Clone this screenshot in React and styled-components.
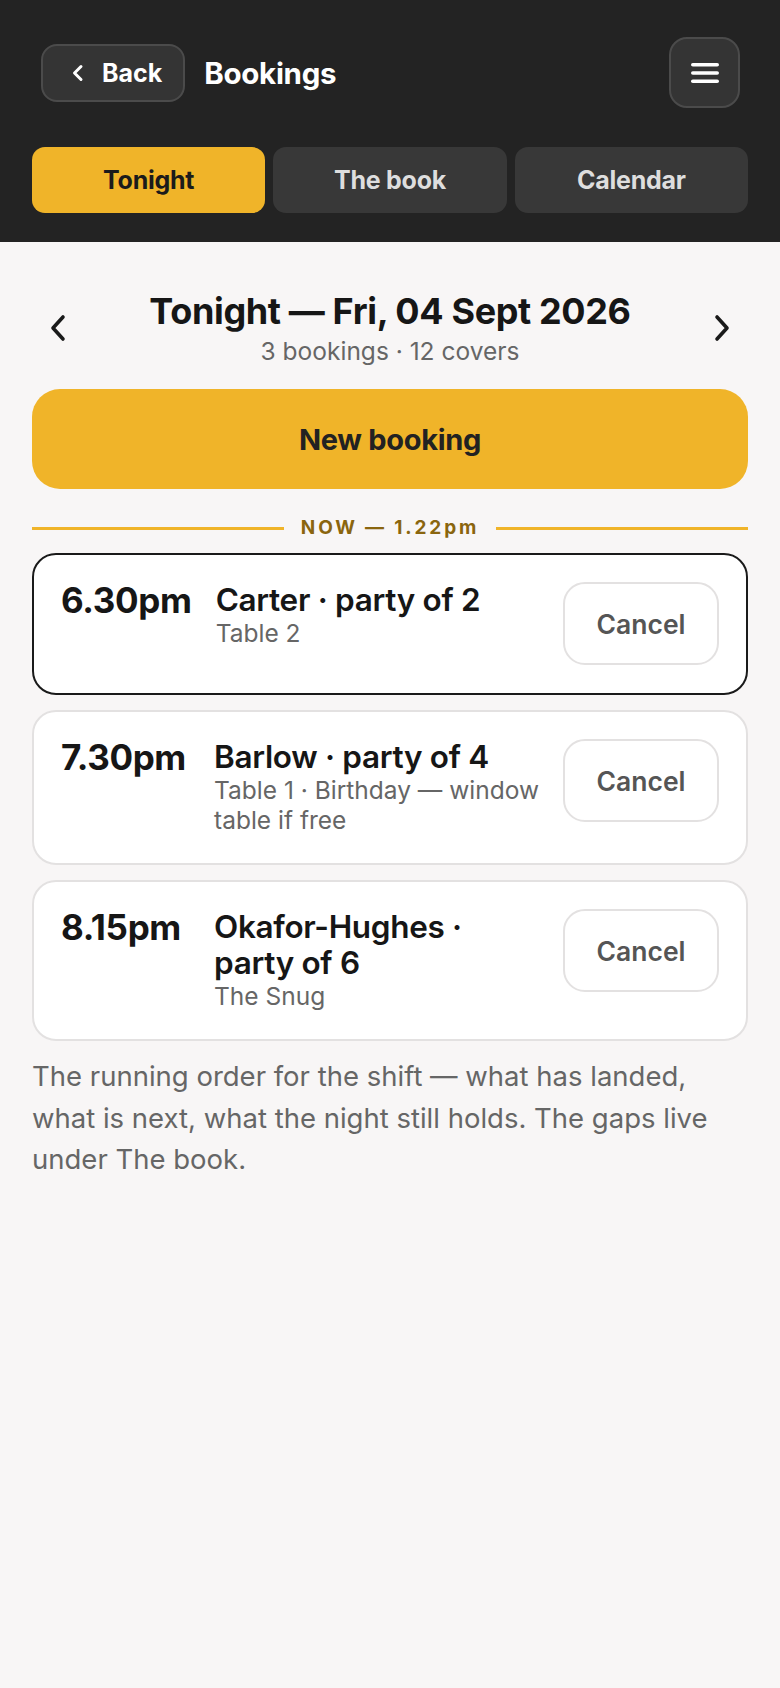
import React from "react"
import styled, { createGlobalStyle } from "styled-components"

const GlobalStyle = createGlobalStyle`
  html, body {
    margin: 0;
    padding: 0;
    background: #f8f6f6;
    font-family: Inter, "Noto Sans", "Liberation Sans", sans-serif;
  }
  * { box-sizing: border-box; }
`

const Page = styled.div`
  min-height: 1688px;
  background: #f8f6f6;
`

const Header = styled.header`
  background: #232323;
  padding: 37px 32px 29px;
`

const TopRow = styled.div`
  display: flex;
  align-items: center;
  padding: 0 8px 0 9px;
  gap: 19px;
`

const BackButton = styled.button`
  display: flex;
  align-items: center;
  gap: 18px;
  height: 58px;
  padding: 0 21px 0 29px;
  background: #343434;
  border: 2px solid #4b4b4b;
  border-radius: 16px;
  color: #fff;
  font-family: inherit;
  font-size: 25px;
  font-weight: 700;
`

const Title = styled.h1`
  margin: 0;
  flex: 1;
  color: #fff;
  font-size: 29.5px;
  font-weight: 700;
  letter-spacing: -0.01em;
`

const MenuButton = styled.button`
  width: 71px;
  height: 71px;
  display: flex;
  align-items: center;
  justify-content: center;
  background: #343434;
  border: 2px solid #4b4b4b;
  border-radius: 18px;
  padding: 0;
`

const Tabs = styled.nav`
  display: grid;
  grid-template-columns: repeat(3, 1fr);
  gap: 8px;
  margin-top: 39px;
`

const Tab = styled.button`
  height: 66px;
  border: none;
  border-radius: 13px;
  font-family: inherit;
  font-size: 25px;
  font-weight: 700;
  letter-spacing: -0.01em;
  background: ${(p) => (p.$active ? "#f0b429" : "#383838")};
  color: ${(p) => (p.$active ? "#1b1b1b" : "#dedede")};
`

const Main = styled.main`
  padding: 48px 32px 40px;
`

const DateNav = styled.div`
  display: flex;
  align-items: center;
  justify-content: space-between;
  padding: 0 14px;
`

const Chevron = styled.button`
  background: none;
  border: none;
  padding: 0;
  display: flex;
  color: #1a1a1a;
`

const DateText = styled.div`
  text-align: center;
`

const DateTitle = styled.h2`
  margin: 0;
  font-size: 36px;
  font-weight: 700;
  color: #161616;
  letter-spacing: -0.01em;
  line-height: 42px;
`

const DateSub = styled.div`
  margin-top: 4px;
  font-size: 24.5px;
  color: #666;
  line-height: 30px;
`

const NewBooking = styled.button`
  width: 100%;
  height: 100px;
  margin-top: 23px;
  background: #f0b429;
  border: none;
  border-radius: 28px;
  font-family: inherit;
  font-size: 29px;
  font-weight: 700;
  letter-spacing: -0.01em;
  color: #222;
`

const NowLine = styled.div`
  display: flex;
  align-items: center;
  gap: 17px;
  margin: 28px 0 14px;
  line-height: 22px;
  color: #8a650e;
  font-size: 19px;
  font-weight: 700;
  letter-spacing: 0.15em;
  &::before, &::after {
    content: "";
    flex: 1;
    height: 3px;
    background: #f0b429;
  }
`

const List = styled.div`
  display: flex;
  flex-direction: column;
  gap: 15px;
`

const Card = styled.div`
  display: flex;
  align-items: flex-start;
  gap: 24px;
  padding: 27px 27px 28px;
  background: #fff;
  border: 2px solid ${(p) => (p.$current ? "#1a1a1a" : "#e3e1e1")};
  border-radius: 24px;
`

const Time = styled.div`
  flex: none;
  min-width: 129px;
  font-size: 35px;
  font-weight: 700;
  color: #161616;
  line-height: 36px;
  letter-spacing: -0.01em;
  white-space: nowrap;
`

const Details = styled.div`
  flex: 1;
  min-width: 0;
`

const Name = styled.div`
  font-size: 31.5px;
  font-weight: 600;
  color: #161616;
  line-height: 36px;
  letter-spacing: -0.01em;
`

const Note = styled.div`
  font-size: 24.5px;
  color: #666;
  line-height: 30px;
`

const CancelButton = styled.button`
  flex: none;
  width: 156px;
  height: 83px;
  background: #fff;
  border: 2px solid #e3e1e1;
  border-radius: 22px;
  font-family: inherit;
  font-size: 26.5px;
  font-weight: 600;
  color: #555;
`

const Footnote = styled.p`
  margin: 15px 0 0;
  font-size: 27.5px;
  line-height: 41.5px;
  color: #666;
`

const bookings = [
  { time: "6.30pm", name: "Carter · party of 2", note: "Table 2", current: true },
  { time: "7.30pm", name: "Barlow · party of 4", note: "Table 1 · Birthday — window table if free" },
  { time: "8.15pm", name: "Okafor-Hughes · party of 6", note: "The Snug" },
]

const App = () => (
  <Page>
    <GlobalStyle />
    <Header>
      <TopRow>
        <BackButton>
          <svg width="12" height="20" viewBox="0 0 12 20" fill="none">
            <path d="M9 3.5 L2.5 10 L9 16.5" stroke="#fff" strokeWidth="3" strokeLinecap="round" strokeLinejoin="round" />
          </svg>
          Back
        </BackButton>
        <Title>Bookings</Title>
        <MenuButton aria-label="Menu">
          <svg width="32" height="24" viewBox="0 0 32 24">
            <rect x="2" y="2" width="28" height="3.6" rx="1.8" fill="#fff" />
            <rect x="2" y="10.2" width="28" height="3.6" rx="1.8" fill="#fff" />
            <rect x="2" y="18.4" width="28" height="3.6" rx="1.8" fill="#fff" />
          </svg>
        </MenuButton>
      </TopRow>
      <Tabs>
        <Tab $active>Tonight</Tab>
        <Tab>The book</Tab>
        <Tab>Calendar</Tab>
      </Tabs>
    </Header>
    <Main>
      <DateNav>
        <Chevron aria-label="Previous day">
          <svg width="24" height="34" viewBox="0 0 24 34" fill="none">
            <path d="M17 6 L7 17 L17 28" stroke="#1a1a1a" strokeWidth="3.6" strokeLinecap="round" strokeLinejoin="round" />
          </svg>
        </Chevron>
        <DateText>
          <DateTitle>Tonight — Fri, 04 Sept 2026</DateTitle>
          <DateSub>3 bookings · 12 covers</DateSub>
        </DateText>
        <Chevron aria-label="Next day">
          <svg width="24" height="34" viewBox="0 0 24 34" fill="none">
            <path d="M7 6 L17 17 L7 28" stroke="#1a1a1a" strokeWidth="3.6" strokeLinecap="round" strokeLinejoin="round" />
          </svg>
        </Chevron>
      </DateNav>
      <NewBooking>New booking</NewBooking>
      <NowLine>NOW — 1.22pm</NowLine>
      <List>
        {bookings.map((b) => (
          <Card key={b.time} $current={b.current}>
            <Time>{b.time}</Time>
            <Details>
              <Name>{b.name}</Name>
              <Note>{b.note}</Note>
            </Details>
            <CancelButton>Cancel</CancelButton>
          </Card>
        ))}
      </List>
      <Footnote>
        The running order for the shift — what has landed, what is next, what the night still holds. The gaps live under The book.
      </Footnote>
    </Main>
  </Page>
)

export default App
